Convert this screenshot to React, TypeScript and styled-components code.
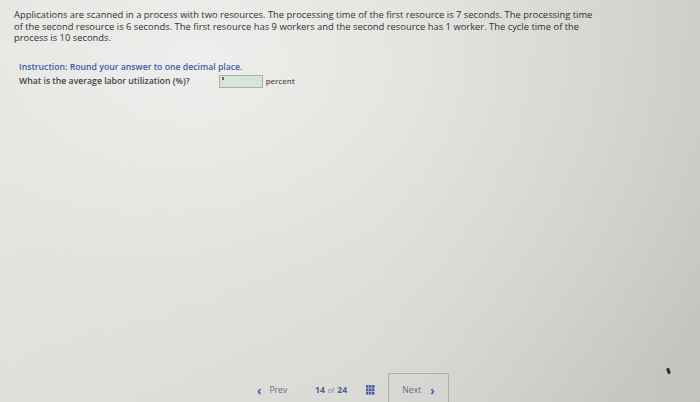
import React from 'react'
import styled, { createGlobalStyle } from 'styled-components'

const Global = createGlobalStyle`
  html, body { margin: 0; padding: 0; }
  body { font-family: 'Open Sans', 'Liberation Sans', sans-serif; }
`

const Page = styled.div`
  position: relative;
  width: 700px;
  height: 402px;
  box-sizing: border-box;
  padding: 9px 0 0 14px;
  display: flex;
  flex-direction: column;
  overflow: hidden;
  background:
    radial-gradient(ellipse 640px 440px at 200px 60px, rgba(240,240,238,0.9) 0%, rgba(232,232,229,0.5) 50%, rgba(214,214,210,0) 100%),
    linear-gradient(100deg, #dfdfdc 0%, #d6d6d2 55%, #c2c2be 100%);
  color: #3a3a3a;
`

const Question = styled.div`
  display: flex;
  flex-direction: column;
  font-size: 9.4px;
  line-height: 11.5px;
  color: #333;
`

const Line = styled.span`
  white-space: nowrap;
  height: 11.5px;
  overflow: visible;
`

const Block = styled.div`
  margin-top: 17px;
  padding-left: 5px;
  display: flex;
  flex-direction: column;
  gap: 2px;
  font-size: 8.7px;
  font-weight: 600;
`

const Instruction = styled.div`
  color: #3d5ca6;
`

const Label = styled.span`
  color: #444;
`

const AnswerRow = styled.div`
  display: flex;
  align-items: center;
  gap: 3px;
`

const Input = styled.div`
  margin-left: 26px;
  width: 42px;
  height: 11px;
  border: 1px solid #a4b5a8;
  background: #d7e4da;
  position: relative;
`

const Caret = styled.span`
  position: absolute;
  left: 2px;
  top: 1px;
  width: 2px;
  height: 3px;
  background: #5d7264;
`

const Unit = styled.span`
  color: #555;
  font-size: 7.8px;
`

const Nav = styled.div`
  margin-top: auto;
  display: flex;
  align-items: flex-end;
  padding-left: 243px;
  height: 30px;
  font-size: 8.6px;
`

const NavText = styled.span`
  display: flex;
  align-items: center;
  padding-bottom: 6px;
`

const Prev = styled(NavText)`
  width: 58px;
  gap: 8px;
  color: #676b7c;
`

const Counter = styled(NavText)`
  width: 51px;
  gap: 3px;
  color: #4e5e8e;
  font-weight: 700;
`

const Small = styled.span`
  font-size: 6.8px;
  font-weight: 400;
  color: #7d8294;
`

const NextBox = styled.div`
  margin-left: 13px;
  width: 61px;
  height: 29px;
  box-sizing: border-box;
  border: 1px solid #aeaeaa;
  border-bottom: none;
  display: flex;
  align-items: center;
  justify-content: center;
  gap: 9px;
  padding-top: 4px;
  color: #676b7c;
`

const Chevron = styled.span`
  color: #4760a8;
  font-weight: 700;
  font-size: 12px;
  line-height: 9px;
`

const Grid = styled.svg`
  margin-bottom: 7px;
`

const Dot = styled.span`
  position: absolute;
  left: 667px;
  top: 368px;
  width: 3px;
  height: 6px;
  border-radius: 1px;
  background: #2e2e2e;
  transform: rotate(-20deg);
`

export default function App() {
  return (
    <>
      <Global />
      <Page>
        <Question>
          <Line>Applications are scanned in a process with two resources. The processing time of the first resource is 7 seconds. The processing time</Line>
          <Line>of the second resource is 6 seconds. The first resource has 9 workers and the second resource has 1 worker. The cycle time of the</Line>
          <Line>process is 10 seconds.</Line>
        </Question>
        <Block>
          <Instruction>Instruction: Round your answer to one decimal place.</Instruction>
          <AnswerRow>
            <Label>What is the average labor utilization (%)?</Label>
            <Input><Caret /></Input>
            <Unit>percent</Unit>
          </AnswerRow>
        </Block>
        <Nav>
          <Prev><Chevron>‹</Chevron>Prev</Prev>
          <Counter>14 <Small>of</Small> 24</Counter>
          <Grid width="9" height="10" viewBox="0 0 9 10">
            {[0, 1, 2].map(r => [0, 1, 2].map(c => (
              <rect key={`${r}${c}`} x={c * 3} y={r * 3.4} width="2.5" height="2.8" fill="#4a63a8" />
            )))}
          </Grid>
          <NextBox>Next <Chevron>›</Chevron></NextBox>
        </Nav>
        <Dot />
      </Page>
    </>
  )
}
